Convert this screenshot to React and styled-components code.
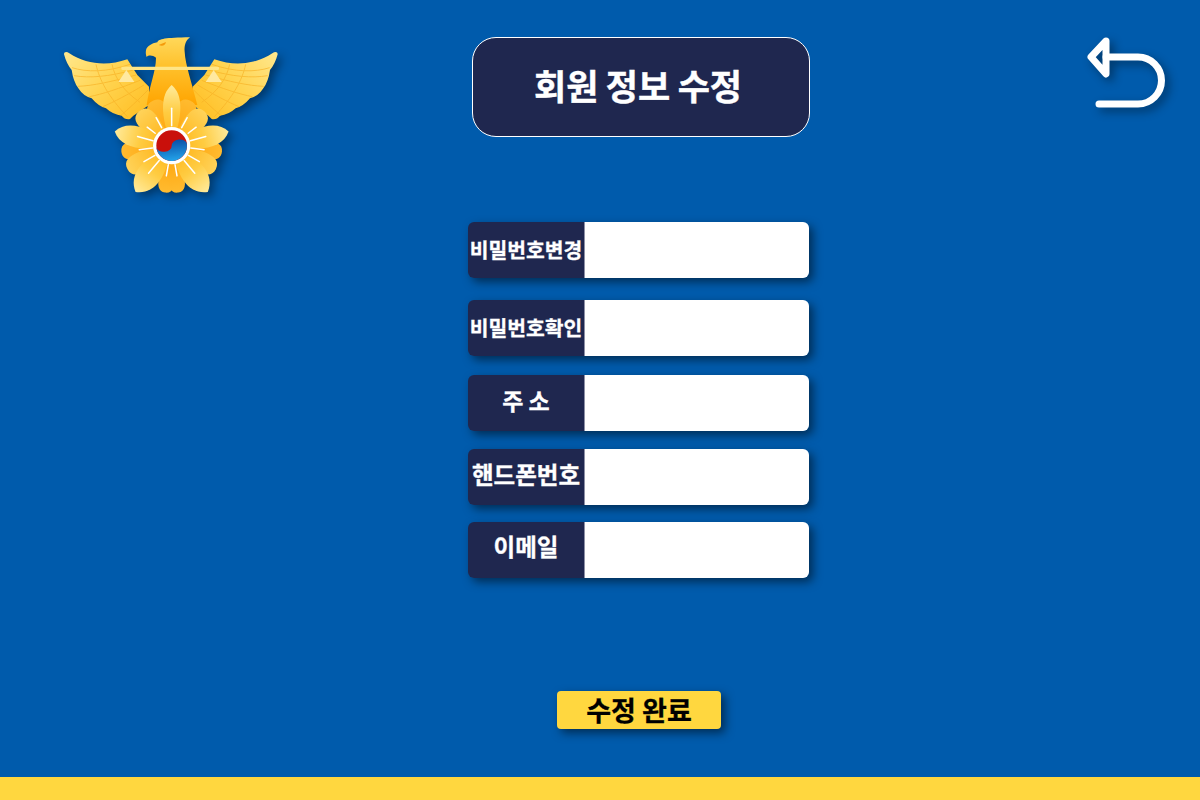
import React from 'react';
import styled, { createGlobalStyle } from 'styled-components';

const GlobalStyle = createGlobalStyle`
  html, body {
    margin: 0;
    padding: 0;
    background: #005bac;
  }
  * {
    box-sizing: border-box;
  }
`;

const Page = styled.div`
  display: flex;
  flex-direction: column;
  width: 1200px;
  height: 800px;
  overflow: hidden;
  background: #005bac;
  font-family: "Noto Sans CJK KR", "Noto Sans", sans-serif;
`;

const Header = styled.header`
  display: flex;
  align-items: flex-start;
  padding: 25px 0 0 50px;
`;

const Logo = styled.svg`
  display: block;
  flex: none;
  width: 240px;
  height: 180px;
  filter: drop-shadow(4px 4px 5px rgba(0, 0, 0, 0.4));
`;

const Title = styled.h1`
  display: flex;
  flex: none;
  align-items: center;
  justify-content: center;
  width: 338px;
  height: 100px;
  margin: 12px 260px 0 182px;
  padding: 0 6px 6px 0;
  border: 1px solid #fff;
  border-radius: 24px;
  background: #1f274f;
  color: #fff;
  font-size: 35px;
  font-weight: 700;
  line-height: 1;
  word-spacing: -0.5px;
  -webkit-text-stroke: 0.4px #fff;
`;

const BackIcon = styled.svg`
  display: block;
  flex: none;
  width: 110px;
  height: 100px;
  filter: drop-shadow(4px 4px 5px rgba(0, 0, 0, 0.4));
`;

const Form = styled.form`
  display: flex;
  flex-direction: column;
  flex: 1;
  align-items: flex-start;
  margin-top: 17px;
  padding-left: 468px;
`;

const Row = styled.label`
  display: flex;
  width: 341px;
  height: 56px;
  margin-top: ${(p) => p.$gap}px;
  border-radius: 6px;
  overflow: hidden;
  box-shadow: 4px 4px 10px rgba(0, 0, 0, 0.5);
`;

const RowName = styled.span`
  display: flex;
  flex: none;
  align-items: center;
  justify-content: center;
  width: 117px;
  padding-bottom: ${(p) => p.$lift}px;
  border-right: 1px solid #8d90a6;
  background: #1f274f;
  color: #fff;
  font-size: ${(p) => p.$size}px;
  font-weight: 700;
  white-space: nowrap;
  -webkit-text-stroke: 0.3px #fff;
`;

const RowInput = styled.input`
  flex: 1;
  min-width: 0;
  border: 0;
  outline: 0;
  padding: 0 10px;
  background: #fff;
  font: inherit;
`;

const Submit = styled.button`
  width: 164px;
  height: 38px;
  margin: 113px 0 0 89px;
  padding: 0 0 2px;
  border: 0;
  border-radius: 4px;
  background: #ffd73f;
  box-shadow: 4px 4px 10px rgba(0, 0, 0, 0.5);
  color: #000;
  font-family: inherit;
  font-size: 27px;
  font-weight: 700;
  line-height: 1;
  -webkit-text-stroke: 0.3px #000;
`;

const Footer = styled.footer`
  flex: none;
  height: 23px;
  background: #ffd73f;
`;

const fields = [
  { name: '비밀번호변경', size: 20.4, lift: 2, gap: 0, type: 'password' },
  { name: '비밀번호확인', size: 20.4, lift: 2, gap: 22, type: 'password' },
  { name: '주 소', size: 23, lift: 6, gap: 19, type: 'text' },
  { name: '핸드폰번호', size: 23.5, lift: 6, gap: 18, type: 'text' },
  { name: '이메일', size: 23.5, lift: 8, gap: 17, type: 'email' },
];

// petal pointing up from the flower centre, rotated by angle
const Petal = ({ angle, len, w, fill, pointed }) => {
  const tip = 362 - len;
  const d = pointed
    ? `M365 ${tip} C${365 + w * 0.62} ${tip + len * 0.16} ${365 + w * 0.62} ${tip + len * 0.5} 365 362 C${365 - w * 0.62} ${tip + len * 0.5} ${365 - w * 0.62} ${tip + len * 0.16} 365 ${tip}Z`
    : `M365 ${tip} C${365 + w} ${tip} ${365 + w * 0.45} ${tip + len * 0.6} 365 362 C${365 - w * 0.45} ${tip + len * 0.6} ${365 - w} ${tip} 365 ${tip}Z`;
  return <path d={d} fill={fill} transform={`rotate(${angle} 365 362)`} />;
};

const rays = [
  [0, 60, 112], [29, 62, 96], [53, 62, 92], [75, 58, 106], [97, 58, 98], [120, 58, 96], [140, 58, 108], [170, 58, 92],
];

const feathers = [
  'M66 128 C110 142 170 142 240 118',
  'M72 152 C120 160 175 155 250 135',
  'M84 184 C130 182 185 170 258 150',
  'M118 215 C155 208 210 190 270 166',
  'M158 245 C190 232 235 208 282 180',
  'M212 272 C235 252 265 225 294 195',
  'M138 118 C148 165 175 215 232 275',
  'M186 118 C195 160 220 198 270 232',
];

const wing = 'M42 88 C42 80 50 79 58 85 C110 118 170 125 232 103 L262 150 L297 185 L297 240 L250 272 L240 282 Q225 285 215 272 Q190 270 168 250 Q145 244 125 220 Q100 214 85 190 Q70 170 65 135 Q50 118 42 88Z';

const Wing = ({ flip }) => (
  <g transform={flip ? 'matrix(-1 0 0 1 725 0)' : undefined}>
    <path d={wing} fill="url(#wing)" />
    <g fill="none" stroke="#f7b024" strokeWidth="3" opacity="0.65">
      {feathers.map((d) => <path key={d} d={d} />)}
    </g>
  </g>
);

const EagleLogo = () => (
  <Logo viewBox="0 0 720 540">
    <defs>
      <linearGradient id="wing" gradientUnits="userSpaceOnUse" x1="60" y1="70" x2="280" y2="270">
        <stop offset="0" stopColor="#ffe78c" />
        <stop offset="0.5" stopColor="#ffd450" />
        <stop offset="1" stopColor="#ffbf25" />
      </linearGradient>
      <linearGradient id="body" x1="0" y1="0" x2="0" y2="1">
        <stop offset="0" stopColor="#ffd85a" />
        <stop offset="0.45" stopColor="#ffc02a" />
        <stop offset="1" stopColor="#ffa400" />
      </linearGradient>
      <linearGradient id="lightPetal" x1="0" y1="0" x2="0" y2="1">
        <stop offset="0" stopColor="#ffeb9c" />
        <stop offset="0.45" stopColor="#ffcc42" />
        <stop offset="1" stopColor="#ffb010" />
      </linearGradient>
      <linearGradient id="midPetal" x1="0" y1="0" x2="0" y2="1">
        <stop offset="0" stopColor="#ffd35a" />
        <stop offset="0.7" stopColor="#ffb922" />
        <stop offset="1" stopColor="#ffa90a" />
      </linearGradient>
      <linearGradient id="deepPetal" x1="0" y1="0" x2="0" y2="1">
        <stop offset="0" stopColor="#ffbb30" />
        <stop offset="1" stopColor="#ff9f02" />
      </linearGradient>
      <linearGradient id="blue" x1="0" y1="0" x2="0" y2="1">
        <stop offset="0" stopColor="#0a50a8" />
        <stop offset="1" stopColor="#24a4ea" />
      </linearGradient>
    </defs>

    <Wing />
    <Wing flip />

    <path d="M288 76 C290 64 305 55 322 52 C326 42 345 38 420 37 C408 46 402 60 404 80 C406 120 425 170 442 240 L290 240 C298 180 318 140 318 98 C308 90 295 90 290 96 C287 90 287 82 288 76Z" fill="url(#body)" />
    <path d="M326 60 L348 51 C346 60 338 66 326 60Z" fill="#f59a0a" />

    <rect x="214" y="125" width="293" height="10" rx="4" fill="#ffe587" />
    <path d="M205 171 L229 135 L253 171Z" fill="#ffe9a0" />
    <path d="M467 171 L491 135 L515 171Z" fill="#ffe9a0" />

    {[-22, 22].map((a) => <Petal key={a} angle={a} len={146} w={54} fill="url(#deepPetal)" />)}
    {[-44, 44].map((a) => <Petal key={a} angle={a} len={142} w={54} fill="url(#midPetal)" />)}
    {[-97, 97].map((a) => <Petal key={a} angle={a} len={152} w={50} fill="url(#deepPetal)" />)}
    {[-118, 118].map((a) => <Petal key={a} angle={a} len={150} w={54} fill="url(#midPetal)" />)}
    {[-172, 172].map((a) => <Petal key={a} angle={a} len={142} w={44} fill="url(#deepPetal)" />)}
    {[-76, 76].map((a) => <Petal key={a} angle={a} len={176} w={68} fill="url(#lightPetal)" pointed />)}
    {[-142, 142].map((a) => <Petal key={a} angle={a} len={176} w={78} fill="url(#lightPetal)" pointed />)}
    <Petal angle={0} len={182} w={56} fill="url(#lightPetal)" pointed />

    <g stroke="#fff" strokeWidth="4.5" strokeLinecap="round">
      {rays.map(([a, from, to]) => (
        <g key={a}>
          <line x1="365" y1={362 - from} x2="365" y2={362 - to} transform={`rotate(${a} 365 362)`} />
          {a > 0 && <line x1="365" y1={362 - from} x2="365" y2={362 - to} transform={`rotate(${-a} 365 362)`} />}
        </g>
      ))}
    </g>

    <circle cx="365" cy="362" r="56" fill="#fff" />
    <circle cx="365" cy="362" r="46" fill="#c9100b" />
    <path d="M319 362 A46 46 0 0 0 411 362 A23 16 0 0 0 365 362 A23 16 0 0 1 319 362Z" fill="url(#blue)" transform="rotate(-6 365 362)" />
  </Logo>
);

const BackArrow = () => (
  <BackIcon viewBox="0 0 110 100" fill="none" stroke="#fff" strokeWidth="7" strokeLinecap="round" strokeLinejoin="round">
    <path d="M36 16 L21 32 L36 49Z" />
    <path d="M36 32 H68 A23.5 23.5 0 0 1 68 79 H29" />
  </BackIcon>
);

const App = () => (
  <Page>
    <GlobalStyle />
    <Header>
      <EagleLogo />
      <Title>회원 정보 수정</Title>
      <BackArrow />
    </Header>
    <Form onSubmit={(e) => e.preventDefault()}>
      {fields.map((f) => (
        <Row key={f.name} $gap={f.gap}>
          <RowName $size={f.size} $lift={f.lift}>{f.name}</RowName>
          <RowInput type={f.type} />
        </Row>
      ))}
      <Submit type="submit">수정 완료</Submit>
    </Form>
    <Footer />
  </Page>
);

export default App;
